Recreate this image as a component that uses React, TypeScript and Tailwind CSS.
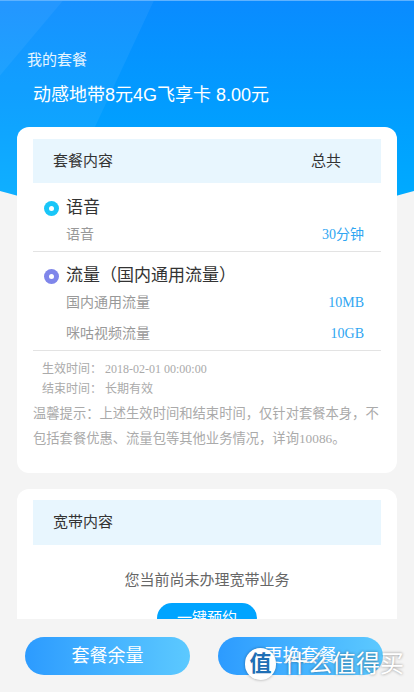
import React from "react";

function Dot({ color }: { color: string }) {
  return (
    <span className={`flex h-[15px] w-[15px] items-center justify-center rounded-full ${color}`}>
      <span className="h-[5px] w-[5px] rounded-full bg-white" />
    </span>
  );
}

function SubRow({ label, value }: { label: string; value: string }) {
  return (
    <div className="flex h-5 items-center justify-between pl-[33px] pr-[17px] text-sm leading-5">
      <span className="text-[#999]">{label}</span>
      <span className="text-[#2fa6f2]">{value}</span>
    </div>
  );
}

export default function App() {
  return (
    <div className="relative h-[692px] w-[414px] overflow-hidden bg-[#f4f4f4] font-['Liberation_Sans','Noto_Sans_CJK_SC',sans-serif]">
      {/* blue header backdrop */}
      <div className="absolute inset-x-0 top-0 h-[218px] overflow-hidden border-t border-[#5fb2ff] bg-gradient-to-b from-[#0a8bff] to-[#00aeff] [clip-path:ellipse(500px_300px_at_50%_-82px)]">
        <div className="absolute -left-[95px] -top-[60px] h-[420px] w-[170px] rotate-[25deg] bg-white/[0.06]" />
        <div className="absolute -left-[60px] -top-[80px] h-[150px] w-[110px] rotate-[40deg] bg-white/[0.05]" />
      </div>

      <div className="relative">
        <div className="px-[27px] pt-[50px] text-[15px] leading-5 text-white/90">我的套餐</div>
        <div className="mt-[13px] px-[33px] text-[18px] leading-6 text-white">动感地带8元4G飞享卡 8.00元</div>

        {/* plan card */}
        <section className="mx-[17px] mt-5 rounded-xl bg-white px-4 pb-[22px] pt-3 font-['Liberation_Serif','Noto_Sans_CJK_SC',serif]">
          <div className="flex h-11 items-center justify-between bg-[#e8f6fe] pl-5 pr-10 text-[15px] text-[#333]">
            <span>套餐内容</span>
            <span>总共</span>
          </div>

          <div className="border-b border-[#e3e3e3] pb-[6px]">
            <div className="mt-[13px] flex h-6 items-center gap-[7px] pl-[11px]">
              <Dot color="bg-[#19c6f8]" />
              <span className="text-[17px] leading-6 text-[#333]">语音</span>
            </div>
            <div className="mt-[5px]">
              <SubRow label="语音" value="30分钟" />
            </div>
          </div>

          <div className="border-b border-[#e3e3e3] pb-[6px]">
            <div className="mt-[12px] flex h-6 items-center gap-[7px] pl-[11px]">
              <Dot color="bg-[#7f86ea]" />
              <span className="text-[17px] leading-6 text-[#333]">流量（国内通用流量）</span>
            </div>
            <div className="mt-[5px] flex flex-col gap-[11px]">
              <SubRow label="国内通用流量" value="10MB" />
              <SubRow label="咪咕视频流量" value="10GB" />
            </div>
          </div>

          <div className="mt-2 pl-[9px] text-xs leading-5 text-[#aaa]">
            <p>生效时间： 2018-02-01 00:00:00</p>
            <p>结束时间： 长期有效</p>
          </div>
          <p className="mt-[2px] text-[13.3px] leading-[25px] text-[#aaa]">
            温馨提示：上述生效时间和结束时间，仅针对套餐本身，不包括套餐优惠、流量包等其他业务情况，详询10086。
          </p>
        </section>

        {/* broadband card */}
        <section className="mx-[17px] mt-4 rounded-xl bg-white px-4 pb-5 pt-[11px]">
          <div className="flex h-[45px] items-center bg-[#e8f6fe] pl-5 text-[15px] text-[#333]">宽带内容</div>
          <p className="mt-[25px] text-center text-[15px] leading-5 text-[#666]">您当前尚未办理宽带业务</p>
          <button className="mx-auto mt-[13px] flex h-[30px] w-[100px] items-center justify-center rounded-full bg-[#00a4ff] text-[15px] text-white">
            一键预约
          </button>
        </section>
      </div>

      {/* bottom action bar */}
      <div className="absolute inset-x-0 bottom-0 flex h-[73px] gap-[28px] bg-[#f4f4f4] pl-[25px] pt-[18px]">
        <button className="flex h-[38px] w-[165px] items-center justify-center rounded-full bg-gradient-to-r from-[#2c9bff] to-[#5cc9ff] text-[18px] text-white">
          套餐余量
        </button>
        <button className="flex h-[38px] w-[165px] items-center justify-center rounded-full bg-gradient-to-r from-[#2c9bff] to-[#5cc9ff] text-[18px] text-white">
          更换套餐
        </button>
      </div>

      {/* watermark */}
      <div className="absolute left-[245px] top-[648px] flex items-center gap-2">
        <span className="flex h-[32px] w-[31px] items-center justify-center rounded-full bg-white text-[22px] font-bold leading-none text-[#1f6fb5] shadow-[0_0_3px_rgba(0,0,0,0.35)]">
          值
        </span>
        <span className="text-[24px] leading-7 text-white [text-shadow:0_0_3px_rgba(0,0,0,0.45)]">什么值得买</span>
      </div>
    </div>
  );
}
